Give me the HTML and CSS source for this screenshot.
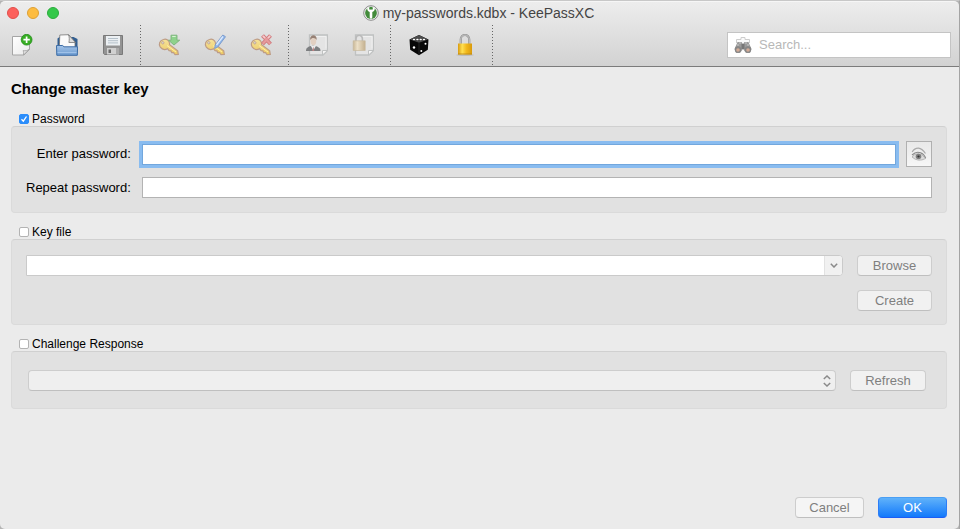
FILE: index.html
```html
<!DOCTYPE html>
<html lang="en">
<head>
<meta charset="utf-8">
<title>my-passwords.kdbx - KeePassXC</title>
<link rel="stylesheet" href="styles.css">
</head>
<body>
<svg width="0" height="0" class="defs" aria-hidden="true">
  <defs>
    <linearGradient id="gold" x1="0" y1="0" x2="0" y2="1"><stop offset="0" stop-color="#f5e39a"/><stop offset="1" stop-color="#ecc862"/></linearGradient>
    <linearGradient id="paper" x1="0" y1="0" x2="1" y2="1"><stop offset="0" stop-color="#fff"/><stop offset="1" stop-color="#e9e9e9"/></linearGradient>
    <linearGradient id="blue" x1="0" y1="0" x2="0" y2="1"><stop offset="0" stop-color="#a3c3e8"/><stop offset="1" stop-color="#6c9bd0"/></linearGradient>
    <linearGradient id="lockbody"><stop offset="0" stop-color="#d99b10"/><stop offset=".3" stop-color="#ffe052"/><stop offset=".6" stop-color="#f2b91c"/><stop offset="1" stop-color="#d99a0c"/></linearGradient>
    <linearGradient id="tan"><stop offset="0" stop-color="#c9b796"/><stop offset=".35" stop-color="#ece0c8"/><stop offset="1" stop-color="#c4b08e"/></linearGradient>
    <symbol id="key" viewBox="0 0 22 22">
      <path d="M5.500 5.500C8 4.300 11 6 11.500 9l.1 1.800 8.100 6 .6 3.600-3.300.2-1.600-2.100-1.700.1-.8-1.700-1.800-.2-1.600-2c-2.500 1.300-5.300.9-7.200-1.500C.2 10 1.800 6.700 5.500 5.500z" fill="url(#gold)" stroke="#bd9c86" stroke-width="1.200"/>
      <circle cx="4.800" cy="8.800" r="1.200" fill="#ddd" stroke="#bd9c86" stroke-width=".8"/>
      <path d="M9 11.500l9 6.500" stroke="#fff0a8" stroke-width="1"/>
    </symbol>
    <symbol id="sheet" viewBox="0 0 22 22">
      <path d="M3.500 1h18v15.500l-4.500 4.500h-13.500z" fill="#e4e4e4" stroke="#bfc1c1" stroke-width="1.300"/>
      <path d="M5 2.500h15v12" fill="none" stroke="#f0f0f0"/>
      <path d="M16.500 21v-4.500h5z" fill="#f7f7f7" stroke="#bfc1c1"/>
    </symbol>
  </defs>
</svg>
<div class="window">
  <header class="chrome">
    <div class="titlebar">
      <div class="lights">
        <button class="light close" aria-label="Close"></button>
        <button class="light minimize" aria-label="Minimize"></button>
        <button class="light maximize" aria-label="Zoom"></button>
      </div>
      <div class="title">
        <svg class="logo" viewBox="0 0 16 16" aria-hidden="true">
          <circle cx="8" cy="8" r="7.300" fill="#f2f2f2" stroke="#8b8b8b"/>
          <circle cx="8" cy="8" r="5.900" fill="#438b3b"/>
          <path d="M4.200 2.700C4 5.500 5.300 6.300 6.700 7v5.500L8 14.300l1.300-1.800V7c1.400-.7 2.700-1.500 2.500-4.300L9.800 2v2.600H6.200V2z" fill="#fff"/>
          <circle cx="8" cy="3" r="1.200" fill="#438b3b"/>
        </svg>
        <span>my-passwords.kdbx - KeePassXC</span>
      </div>
      <div class="balance"></div>
    </div>
    <div class="toolbar">
      <button class="tool first" aria-label="New database"><svg viewBox="0 0 22 22">
        <path d="M1.500 2.500h17v13l-5.500 5.500H1.500z" fill="url(#paper)" stroke="#a5a5a5"/>
        <path d="M12.500 21c.3-1.600 0-3.200-.3-4.500 2 .5 4.500.2 6.300-1.500z" fill="#e0e0e0" stroke="#a0a0a0" stroke-width=".8"/>
        <circle cx="15.600" cy="5.700" r="5.400" fill="#37ad23" stroke="#1f8c18" stroke-width=".8"/>
        <path d="M15.600 2.500v6.400M12.400 5.700h6.400" stroke="#fff" stroke-width="1.700"/>
      </svg></button>
      <button class="tool" aria-label="Open database"><svg viewBox="0 0 22 22">
        <path d="M1.500 4.500l2-1.500h14l4 2v9h-20z" fill="#315e91"/>
        <path d="M3.300 14L3.800 1 12.500.7l6.500 7.300v6z" fill="#fafafa" stroke="#777" stroke-width=".8"/>
        <path d="M12.500.7c1 2.500.9 5 .4 7.800L19.500 8.500z" fill="#ddd" stroke="#777" stroke-width=".8"/>
        <path d="M.5 11.500h6.200l1.300 1.300h13.600l-.3 8.500H.8z" fill="url(#blue)" stroke="#3c6ca5"/>
        <path d="M1.500 18.500h19" stroke="#a9c9ee" stroke-width=".8"/>
      </svg></button>
      <button class="tool" aria-label="Save database"><svg viewBox="0 0 22 22">
        <path d="M1.500 1.500h19v19h-18l-1-1z" fill="#939393" stroke="#797979"/>
        <path d="M4 2h14v9.500H4z" fill="#ecf0f3"/>
        <path d="M6 4.500h10M6 6.700h10M6 8.900h10" stroke="#afbbc5" stroke-width=".9"/>
        <path d="M5 14h12v6.500H5z" fill="#d1d1d1"/><path d="M6.500 15.500H9V19H6.500z" fill="#686868"/>
        <path d="M14 14h3v6.500h-3z" fill="#aaa"/>
      </svg></button>
      <span class="separator"></span>
      <button class="tool" aria-label="Add entry"><svg viewBox="0 0 22 22"><use href="#key"/>
        <path d="M13 1.200h6v5h2.700L16 11l-5.500-4.800H13z" fill="#8ed28c" stroke="#7bb37b" stroke-width=".9"/><path d="M14.200 2.500h3.500" stroke="#d8f2d5"/>
      </svg></button>
      <button class="tool" aria-label="Edit entry"><svg viewBox="0 0 22 22"><use href="#key"/>
        <path d="M18.800 1l2.700 1.700-7.700 10.300-3.200 1.500.6-3.600z" fill="#8fb7ea" stroke="#7898cb" stroke-width=".9"/><path d="M19 2.500l-6.500 8.500" stroke="#dceaff" stroke-width="1.300"/>
      </svg></button>
      <button class="tool" aria-label="Delete entry"><svg viewBox="0 0 22 22"><use href="#key"/>
        <path d="M12.500 1.500l8 8.500M20.500 1.500l-8 8.500" stroke="#cf7a7d" stroke-width="4"/><path d="M12.800 1.800l7.400 7.900M20.200 1.800l-7.400 7.900" stroke="#e69a9c" stroke-width="2.200"/><path d="M13 2l2 2M20 2l-2 2" stroke="#f6cccd" stroke-width="1.700"/>
      </svg></button>
      <span class="separator"></span>
      <button class="tool" aria-label="Copy username"><svg viewBox="0 0 22 22"><use href="#sheet"/>
        <path d="M0 17c0-3.500 2-4.300 7-5.500 5 1.200 7.500 2 7.500 5.500z" fill="#7d7f81"/>
        <path d="M4.800 11.800L7.300 16.500l2.700-4.700z" fill="#eee"/><path d="M7.300 12.500l-1 4.500h2z" fill="#c08080"/>
        <ellipse cx="7.400" cy="6.500" rx="2.900" ry="4.800" fill="#e2d0c2"/><path d="M4.300 6C3-.3 11.800-.5 10.500 6 9.800 3.500 5.500 3 4.300 6z" fill="#968074"/>
      </svg></button>
      <button class="tool" aria-label="Copy password"><svg viewBox="0 0 22 22"><use href="#sheet"/>
        <path d="M4 8V4.700a3.200 3.200 0 0 1 6.400 0V8" fill="none" stroke="#bababa" stroke-width="1.600"/><path d="M1.200 6.800h12v9.700h-12z" fill="url(#tan)" stroke="#c8ba9f" stroke-width=".7"/>
      </svg></button>
      <span class="separator"></span>
      <button class="tool" aria-label="Password generator"><svg viewBox="0 0 22 22">
        <path d="M11 1l9.500 4.500-.7 10.200L11 21.300l-8.800-5.600-.7-10.200z" fill="#080808"/><path d="M11 1l9 4.500-9 3.300-9-3.300z" fill="#4b4b4b"/><path d="M11 9v12" stroke="#303030" stroke-width=".7"/>
        <g fill="#fff"><ellipse cx="6" cy="5.500" rx="1.200" ry=".7"/><ellipse cx="9.400" cy="5.500" rx="1.200" ry=".7"/><ellipse cx="12.700" cy="5.500" rx="1.200" ry=".7"/><ellipse cx="16" cy="5.500" rx="1.200" ry=".7"/><circle cx="6" cy="13.500" r="1.200"/><circle cx="17.500" cy="9.700" r="1"/><circle cx="13.300" cy="17" r="1"/></g>
      </svg></button>
      <button class="tool" aria-label="Lock database"><svg viewBox="0 0 22 22">
        <ellipse cx="11" cy="21" rx="9" ry=".8" fill="#b4b4b4"/><path d="M6.800 10V5.200a4.200 4.200 0 0 1 8.400 0V10" fill="none" stroke="#8a8a8a" stroke-width="2.200"/><path d="M6.800 10V5.200a4.200 4.200 0 0 1 8.400 0V10" fill="none" stroke="#d0d0d0"/><path d="M4 9.500h14v11H4z" fill="url(#lockbody)"/><path d="M4 20h14" stroke="#b98410" stroke-width=".8"/>
      </svg></button>
      <span class="separator"></span>
      <label class="search">
        <svg viewBox="0 0 18 18" aria-hidden="true">
          <path d="M2.500 7V3.500h4.500V1.500h4v2h4.500V7" fill="#fafafa" stroke="#cdcdcd"/>
          <path d="M3.500 6h4L9 8l1.500-2h4l3 7-1.500 4h-4L9 13l-3 4H2L.5 13z" fill="#9b9b9b"/><path d="M7.500 8h3v5h-3z" fill="#777"/>
          <circle cx="4" cy="13.500" r="3.200" fill="#868686"/><circle cx="14" cy="13.500" r="3.200" fill="#868686"/><circle cx="4" cy="14" r="1.800" fill="#d3ab96"/><circle cx="14" cy="14" r="1.800" fill="#d3ab96"/><path d="M5 7h2M11 7h2M3 9h2M13 9h2" stroke="#c8c8c8"/>
        </svg>
        <input type="text" placeholder="Search..." aria-label="Search">
      </label>
    </div>
  </header>
  <main class="content">
    <h1>Change master key</h1>
    <section class="group">
      <label class="toggle"><input type="checkbox" checked><span>Password</span></label>
      <div class="panel passwords">
        <label for="enter">Enter password:</label>
        <div class="line"><input class="field focused" id="enter" type="password">
          <button class="eye" aria-label="Show password"><svg viewBox="0 0 16 16">
            <path d="M1.200 6Q3.500 2 7.500 2.200 11 2.500 14.500 7.500" fill="none" stroke="#aaa" stroke-width="1.200"/><path d="M1 9Q5 5 9.500 6.700 13 8 14.700 12" fill="none" stroke="#888" stroke-width="1.100"/><path d="M1 11q6 5.500 13.700 1.500Q11 7.500 7 7.700T1 11z" fill="#dcdcdc" stroke="#aaa" stroke-width=".8"/><circle cx="7.500" cy="10.500" r="2.800" fill="#808080"/><circle cx="7.500" cy="10.500" r="1.100" fill="#333"/>
          </svg></button></div>
        <label for="repeat">Repeat password:</label>
        <input class="field" id="repeat" type="password">
      </div>
    </section>
    <section class="group">
      <label class="toggle"><input type="checkbox"><span>Key file</span></label>
      <div class="panel keyfile">
        <div class="combo"><input type="text" aria-label="Key file path" disabled><button aria-label="Show key files" disabled><svg viewBox="0 0 8 5"><path d="M.8.8L4 4 7.200.8"/></svg></button></div>
        <button class="push" disabled>Browse</button>
        <button class="push create" disabled>Create</button>
      </div>
    </section>
    <section class="group">
      <label class="toggle"><input type="checkbox"><span>Challenge Response</span></label>
      <div class="panel challenge">
        <div class="picker"><select aria-label="Challenge response device" disabled><option></option></select><svg viewBox="0 0 8 12" aria-hidden="true"><path d="M.8 4L4 1l3.200 3M.8 8L4 11l3.200-3"/></svg></div>
        <button class="push" disabled>Refresh</button>
      </div>
    </section>
    <footer class="actions">
      <button class="push cancel">Cancel</button>
      <button class="push ok">OK</button>
    </footer>
  </main>
</div>
</body>
</html>
```
FILE: styles.css
```css
* { box-sizing: border-box; }
body {
  margin: 0;
  background: #b4b4b4;
  color: #000;
  font: 13px/16px "Liberation Sans", Arial, sans-serif;
}
button, input, select { font: inherit; margin: 0; padding: 0; }
svg { display: block; }
.defs { position: absolute; }
.window {
  display: flex;
  flex-direction: column;
  min-height: 100vh;
  border-top: 1px solid #c8c8c8;
  border-right: 1px solid #a4a4a4;
}
.chrome {
  background: linear-gradient(#ededed, #d2d2d2);
  border-top: 1px solid #f6f6f6;
  border-bottom: 1px solid #7b7b7b;
  border-radius: 5px 5px 0 0;
}
.titlebar { display: flex; align-items: center; height: 22px; padding: 0 9px 0 7px; }
.lights, .balance { display: flex; flex: 1; gap: 8px; }
.light { width: 12px; height: 12px; border: 1px solid; border-radius: 50%; }
.close { background: #fc605c; border-color: #e24e4a; }
.minimize { background: #fdbc40; border-color: #dea034; }
.maximize { background: #34c84a; border-color: #2bac3c; }
.title { display: flex; align-items: center; gap: 4px; color: #444; font-size: 14px; }
.logo { width: 16px; height: 16px; }
.toolbar { display: flex; align-items: center; height: 42px; padding-right: 8px; }
.tool {
  display: grid;
  place-items: center;
  width: 46px;
  height: 40px;
  border: 0;
  background: none;
}
.tool.first { width: 44px; }
.tool svg { width: 22px; height: 22px; }
.separator {
  width: 10px;
  height: 40px;
  padding-left: 4px;
}
.separator::before {
  content: "";
  display: block;
  width: 1px;
  height: 100%;
  background: repeating-linear-gradient(#666 0 1px, transparent 1px 3px);
}
.search {
  display: flex;
  align-items: center;
  gap: 7px;
  width: 224px;
  height: 26px;
  margin-left: auto;
  padding: 0 6px;
  background: #fff;
  border: 1px solid #c4c4c4;
}
.search svg { width: 18px; height: 18px; }
.search input { flex: 1; min-width: 0; border: 0; outline: 0; background: none; }
.search input::placeholder { color: #b8b8b8; }
.content {
  display: flex;
  flex: 1;
  flex-direction: column;
  padding: 12px 12px 11px 11px;
  background: #ebebeb;
  border-radius: 0 0 5px 5px;
}
h1 { margin: 0 0 13px; font-size: 15px; line-height: 20px; }
.group { margin-bottom: 12px; }
.toggle {
  display: flex;
  align-items: center;
  gap: 3px;
  width: max-content;
  height: 13px;
  margin-left: 8px;
  font-size: 12px;
}
.toggle input {
  appearance: none;
  width: 10px;
  height: 10px;
  background: #fff;
  border: 1px solid #b3b3b3;
  border-radius: 2px;
}
.toggle input:checked {
  background: #2b8dfb url("data:image/svg+xml,%3Csvg xmlns='http://www.w3.org/2000/svg' viewBox='0 0 8 8'%3E%3Cpath d='M1.500 4.300L3.300 6.200 6.500 1.500' fill='none' stroke='white' stroke-width='1.300'/%3E%3C/svg%3E");
  border-color: #2b8dfb;
}
.panel {
  display: grid;
  align-items: center;
  margin-top: 1px;
  padding: 15px;
  background: #e1e1e1;
  border: 1px solid #dadada;
  border-top-color: #d0d0d0;
  border-radius: 4px;
}
.passwords {
  grid-template-columns: max-content 1fr;
  gap: 10px 11px;
  padding: 14px;
  text-align: right;
}
.line { display: flex; align-items: center; gap: 10px; }
.field {
  flex: 1;
  width: 100%;
  height: 21px;
  background: #fff;
  border: 1px solid #b3b3b3;
  outline: 0;
}
.focused { border-color: #72a7dd; box-shadow: 0 0 0 3px #89bcf0; }
.eye {
  display: grid;
  place-items: center;
  width: 26px;
  height: 26px;
  background: linear-gradient(#e9e9e9, #f6f6f6);
  border: 1px solid #b0b0b0;
}
.eye svg { width: 16px; height: 16px; }
.keyfile { grid-template-columns: 1fr 75px; gap: 14px; padding: 15px 14px 13px; }
.create { grid-column: 2; }
.combo {
  display: flex;
  height: 21px;
  background: #fff;
  border: 1px solid #cacaca;
  border-radius: 0 4px 4px 0;
  overflow: hidden;
}
.combo input { flex: 1; min-width: 0; border: 0; background: #fff; }
.combo button {
  display: grid;
  place-items: center;
  width: 18px;
  border: 0;
  border-left: 1px solid #e2e2e2;
  background: #f1f1f1;
}
.combo svg { width: 8px; height: 5px; }
.combo path, .picker path { fill: none; stroke: #8a8a8a; stroke-width: 1.5; }
.push {
  height: 21px;
  color: #7f7f7f;
  background: #f1f1f1;
  border: 1px solid #cdcdcd;
  border-bottom-color: #bfbfbf;
  border-radius: 4px;
}
.challenge { grid-template-columns: 1fr 76px; gap: 14px; padding: 18px 20px 17px 16px; }
.picker { position: relative; }
.picker select {
  display: block;
  appearance: none;
  width: 100%;
  height: 21px;
  background: #efefef;
  border: 1px solid #cdcdcd;
  border-bottom-color: #bfbfbf;
  border-radius: 4px;
  opacity: 1;
}
.picker svg { position: absolute; right: 5px; top: 5px; width: 8px; height: 12px; }
.actions { display: flex; justify-content: flex-end; gap: 14px; margin-top: auto; }
.actions .push { width: 69px; }
.actions .cancel { background: #f5f5f5; }
.actions .ok {
  color: #fff;
  background: linear-gradient(#60b2fa, #1279fb);
  border-color: #4a9ff4 #2c7df8 #1c5df5;
}
```
